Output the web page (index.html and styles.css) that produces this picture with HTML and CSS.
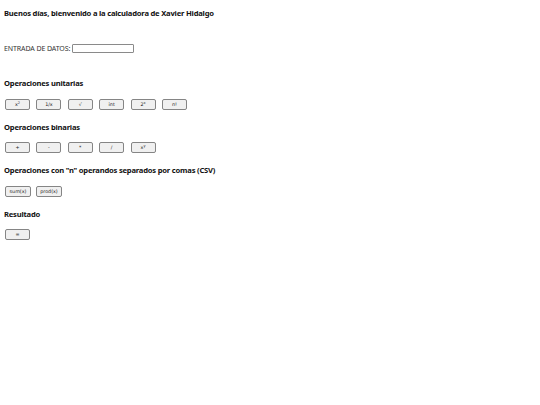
FILE: index.html
```html
<!DOCTYPE html>
<html lang="es">
<head>
<meta charset="utf-8">
<title>Calculadora</title>
<link rel="stylesheet" href="styles.css">
</head>
<body>
<h1 class="title">Buenos días, bienvenido a la calculadora de Xavier Hidalgo</h1>
<div class="entry">
  <label class="entry-label" for="datos">ENTRADA DE DATOS:</label>
  <input class="entry-input" id="datos" type="text">
</div>
<h2 class="section">Operaciones unitarias</h2>
<div class="row">
  <button class="btn">x<sup>2</sup></button>
  <button class="btn">1/x</button>
  <button class="btn">√</button>
  <button class="btn">int</button>
  <button class="btn">2<sup>x</sup></button>
  <button class="btn">n!</button>
</div>
<h2 class="section">Operaciones binarias</h2>
<div class="row">
  <button class="btn">+</button>
  <button class="btn">-</button>
  <button class="btn">*</button>
  <button class="btn">/</button>
  <button class="btn">x<sup>y</sup></button>
</div>
<h2 class="section">Operaciones con "n" operandos separados por comas (CSV)</h2>
<div class="row row-n">
  <button class="btn btn-auto">sum(x)</button>
  <button class="btn btn-auto">prod(x)</button>
</div>
<h2 class="section">Resultado</h2>
<div class="row">
  <button class="btn">=</button>
</div>
</body>
</html>
```
FILE: styles.css
```css
html, body {
  margin: 0;
  padding: 0;
  background: #ffffff;
}
body {
  padding: 0 4px;
  font-family: "Noto Sans", "Open Sans", sans-serif;
  color: #111;
}
.title {
  margin: 8px 0 0;
  font-size: 7.6px;
  line-height: 10px;
  font-weight: 700;
  letter-spacing: -0.2px;
}
.entry {
  display: flex;
  align-items: center;
  gap: 2px;
  height: 10px;
  margin-top: 25px;
}
.entry-label {
  font-size: 7px;
  color: #333;
  letter-spacing: -0.1px;
}
.entry-input {
  width: 62px;
  height: 9px;
  box-sizing: border-box;
  border: 1px solid #8a8a8a;
  border-radius: 1px;
  padding: 0;
  margin: 0;
  background: #fff;
}
.section {
  margin: 25px 0 0;
  font-size: 7.6px;
  line-height: 10px;
  font-weight: 700;
  letter-spacing: -0.2px;
}
.row {
  display: flex;
  gap: 6.4px;
  margin-top: 10.5px;
  padding-left: 1px;
}
.row + .section {
  margin-top: 12px;
}
.btn {
  width: 25px;
  height: 11px;
  box-sizing: border-box;
  padding: 0;
  margin: 0;
  border: 1px solid #858585;
  border-radius: 2px;
  background: #f0f0f0;
  font-family: "DejaVu Sans", sans-serif;
  font-size: 4.8px;
  line-height: 9px;
  color: #222;
}
.btn sup {
  font-size: 3.5px;
  vertical-align: 2px;
  line-height: 0;
}
.row-n {
  gap: 5px;
}
.btn-auto {
  width: 26px;
}
```
